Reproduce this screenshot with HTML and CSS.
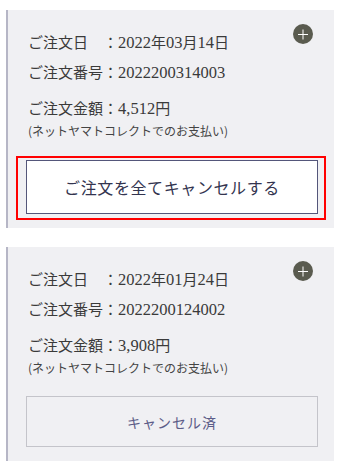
FILE: index.html
```html
<!DOCTYPE html>
<html lang="ja">
<head>
  <meta charset="UTF-8">
  <title>ご注文履歴</title>
  <link rel="stylesheet" href="styles.css">
</head>
<body>
  <div class="order-list">
    <div class="order-card">
      <span class="toggle"></span>
      <p class="order-row">ご注文日　：<span class="num">2022</span>年<span class="num">03</span>月<span class="num">14</span>日</p>
      <p class="order-row">ご注文番号：<span class="num">2022200314003</span></p>
      <p class="order-row amount">ご注文金額：<span class="num">4,512</span>円</p>
      <p class="pay-note">(ネットヤマトコレクトでのお支払い)</p>
      <div class="highlight">
        <button class="cancel-btn">ご注文を全てキャンセルする</button>
      </div>
    </div>

    <div class="order-card">
      <span class="toggle"></span>
      <p class="order-row">ご注文日　：<span class="num">2022</span>年<span class="num">01</span>月<span class="num">24</span>日</p>
      <p class="order-row">ご注文番号：<span class="num">2022200124002</span></p>
      <p class="order-row amount">ご注文金額：<span class="num">3,908</span>円</p>
      <p class="pay-note">(ネットヤマトコレクトでのお支払い)</p>
      <div class="cancelled">キャンセル済</div>
    </div>
  </div>
</body>
</html>
```

FILE: styles.css
```css
body {
  margin: 10px 9px 0 6px;
  font-family: "Noto Sans CJK JP", sans-serif;
  color: #3a3a3a;
  background-color: #fff;
}

.order-list {
  display: flex;
  flex-direction: column;
  gap: 19px;
}

.order-card {
  position: relative;
  background-color: #f0f0f3;
  border-left: 2px solid #b6b6c6;
  padding: 17px 18px 14px 20px;
}

.order-card:first-child {
  padding-bottom: 8px;
}

.order-row {
  margin: 0;
  height: 30px;
  font-size: 15px;
  line-height: 30px;
  white-space: nowrap;
}

.order-row .num {
  font-family: "Liberation Serif", serif;
  font-size: 16.5px;
  line-height: 1;
}

.order-row.amount {
  margin-top: 6px;
}

.pay-note {
  margin: 0;
  font-size: 12px;
  line-height: 16px;
  color: #444;
}

.toggle {
  position: absolute;
  top: 14px;
  right: 21px;
  width: 20px;
  height: 20px;
  border-radius: 50%;
  background-color: #5a5b4f;
}

.toggle::before,
.toggle::after {
  content: "";
  position: absolute;
  left: 5px;
  top: 9.5px;
  width: 10px;
  height: 1px;
  background-color: #fff;
}

.toggle::after {
  transform: rotate(90deg);
}

.highlight {
  margin: 17px -10px 0 -12px;
  border: 2px solid #f00;
  padding: 2px 6px 4px 8px;
}

.cancel-btn {
  display: block;
  width: 100%;
  height: 54px;
  background-color: #fff;
  border: 1px solid #54567a;
  font-family: "Noto Sans CJK JP", sans-serif;
  font-size: 16px;
  letter-spacing: 0.6px;
  color: #33344f;
  cursor: pointer;
}

.cancelled {
  margin: 20px -2px 0 -2px;
  height: 51px;
  box-sizing: border-box;
  border: 1px solid #c4c4ca;
  display: flex;
  align-items: center;
  justify-content: center;
  font-family: "Noto Sans CJK JP", sans-serif;
  font-size: 14px;
  letter-spacing: 1px;
  color: #5c5c88;
}
```
